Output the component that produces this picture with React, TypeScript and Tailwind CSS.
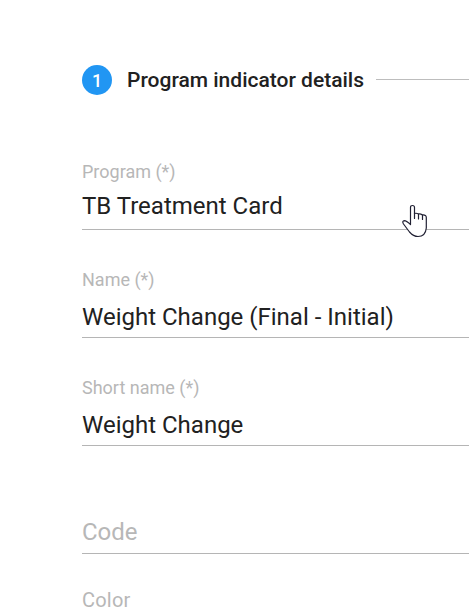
import React from "react";

type FieldProps = { label: string; value: string; valueClass: string };

function Field({ label, value, valueClass }: FieldProps) {
  return (
    <div className="h-[108px] border-b border-[#b5b5b5] pt-[38px]">
      <div className="h-6 text-[18px] leading-6 text-[#b7b7b7]">{label}</div>
      <div className={`text-[24px] leading-8 text-[#212121] ${valueClass}`}>{value}</div>
    </div>
  );
}

export default function App() {
  return (
    <main className="relative h-[612px] w-[469px] overflow-hidden bg-white pl-[82px] pt-[64px] font-['Roboto',sans-serif]">
      <header className="flex h-8 items-center">
        <span className="flex h-[30px] w-[30px] items-center justify-center rounded-full bg-[#2196f3] text-[18px] font-medium text-white">1</span>
        <h1 className="ml-[15px] whitespace-nowrap text-[21px] font-medium leading-8 text-[#212121]">Program indicator details</h1>
        <span className="mb-0.5 ml-3 h-px flex-1 bg-[#bdbdbd]" />
      </header>
      <div className="pt-[26px]">
        <Field label="Program (*)" value="TB Treatment Card" valueClass="mt-[6px]" />
        <Field label="Name (*)" value="Weight Change (Final - Initial)" valueClass="mt-[9px]" />
        <Field label="Short name (*)" value="Weight Change" valueClass="mt-[9px]" />
      </div>
      <div className="h-[108px] border-b border-[#b5b5b5] pt-[70px] text-[24px] leading-8 text-[#b7b7b7]">Code</div>
      <div className="pt-[34px] text-[20px] leading-6 tracking-[0.2px] text-[#b7b7b7]">Color</div>
      <svg className="absolute left-[402px] top-[204px]" width="26" height="34" viewBox="0 0 26 34" fill="white" stroke="#202033" strokeWidth="1.2" strokeLinejoin="round" strokeLinecap="round">
        <path d="M8.5 20.5V3.5Q8.5 1.5 10.5 1.5T12.5 3.5V9.5Q14.5 8.8 16.5 10Q18.5 9.6 20.5 11Q24.3 10.6 24.3 13.5V24Q23.5 32.5 16 32.5Q11.5 32.5 7.5 28L1.5 20Q-.3 17 2.5 16.7Q4.2 16.7 8.5 20.5Z" />
        <path d="M12.5 9V14.5M16.5 10V15M20.5 11V15.5" fill="none" />
      </svg>
    </main>
  );
}
